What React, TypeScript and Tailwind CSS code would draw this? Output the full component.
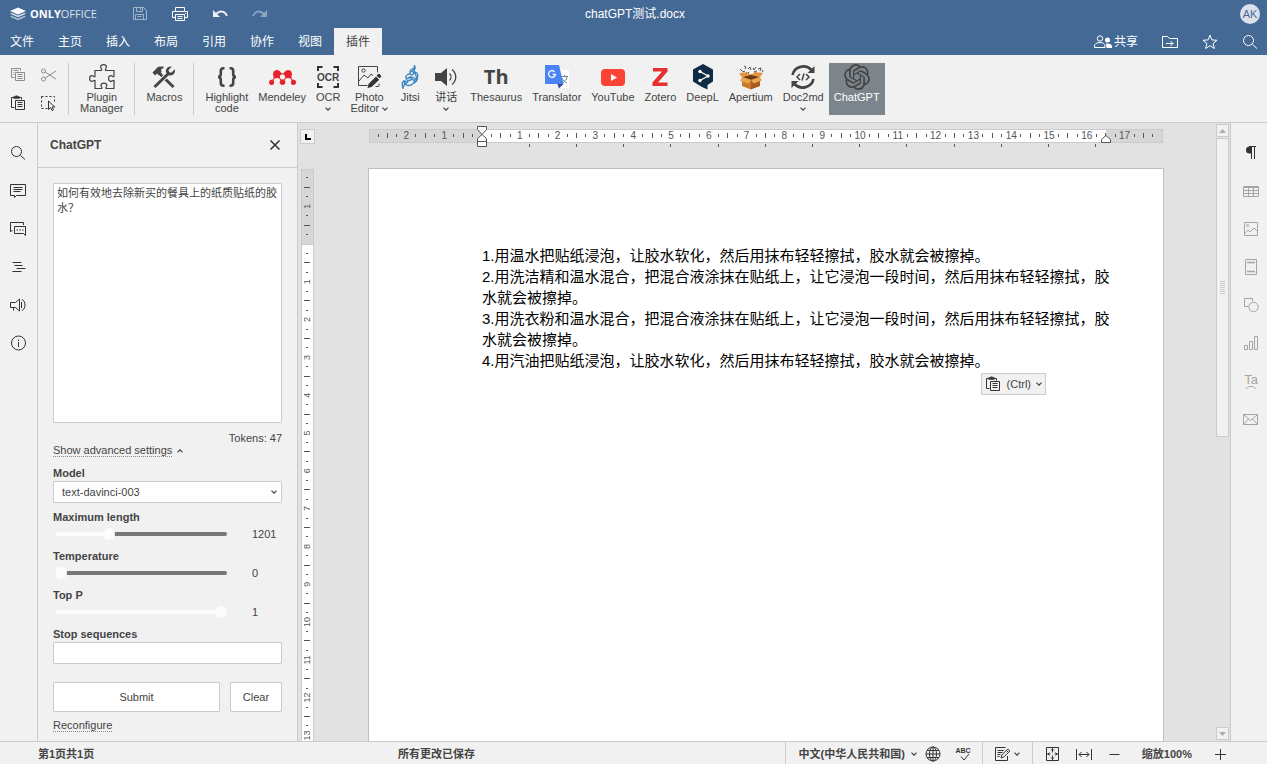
import { useState } from 'react';
import type { ReactNode, SVGProps } from 'react';
import { SiJitsi, SiMendeley, SiOpenai } from 'react-icons/si';

const CM = 37.8;

function Icon({ size = 16, children, ...rest }: { size?: number; children: ReactNode } & SVGProps<SVGSVGElement>) {
    return (
        <svg width={size} height={size} viewBox={`0 0 ${size} ${size}`} fill="none" stroke="currentColor" className="shrink-0" aria-hidden="true" {...rest}>
            {children}
        </svg>
    );
}

function Caret({ up = false }: { up?: boolean }) {
    return (
        <svg width="6" height="4" viewBox="0 0 6 4" fill="none" stroke="#444" strokeWidth="1.2" className="shrink-0" aria-hidden="true">
            <path d={up ? 'M.5 3.3 3 .8l2.5 2.5' : 'M.5.7 3 3.2 5.5.7'} />
        </svg>
    );
}

const copyIcon = (
    <Icon stroke="#8c8c8c">
        <path d="M4.500 10.500H1.500V1.500h9v2M3.500 3.500h5M3.500 5.500h1M3.500 7.500h1M5.500 5.500h9v8h-9zM7.500 7.500h5M7.500 9.500h5M7.500 11.500h5" />
    </Icon>
);

const pasteIcon = (
    <Icon stroke="#333">
        <path d="M4.500 12.500H1.500v-10h2M9.500 2.500h2v2M5.500 5.500h9v9h-9zM7.500 7.500h5M7.500 9.500h5M7.500 11.500h5" />
        <path d="M3.500 3.500v-2h2v-1h2v1h2v2z" fill="#333" stroke="none" />
        <path d="M3.500 2.500h6" strokeWidth="2" />
    </Icon>
);

const cutIcon = (
    <Icon stroke="#8c8c8c">
        <circle cx="3.500" cy="4" r="2" />
        <circle cx="3.500" cy="12" r="2" />
        <path d="M5.200 5 16 12M5.200 11 16 4" />
    </Icon>
);

const selectIcon = (
    <Icon stroke="#333">
        <path d="M1.500 1.500h13v7M1.500 1.500v12h6" strokeDasharray="2 2" />
        <path d="M8.500 6v8.500l2-2 1.500 3 1.500-.7-1.400-2.800h2.700z" fill="#f1f1f1" />
    </Icon>
);

const puzzleIcon = (
    <Icon size={28} stroke="#444" strokeWidth="1.200">
        <path d="M7 7.500h6.500c.8-1.500-.9-2-.9-3.400a2.900 2.400 0 0 1 5.800 0c0 1.400-1.700 1.900-.9 3.400H26v6c-1 .7-1.800-.8-3-.8a2.400 2.800 0 0 0 0 5.600c1.200 0 2-1.500 3-.8v8h-8c-.7-1 .8-1.800.8-3a2.900 2.400 0 0 0-5.800 0c0 1.200 1.500 2 .8 3H7v-8c-1-.7-1.800.8-3 .8a2.400 2.800 0 0 1 0-5.600c1.200 0 2 1.500 3 .8z" />
    </Icon>
);

const macrosIcon = (
    <Icon size={28} stroke="#444">
        <path d="M8.500 9.500 23.500 24" strokeWidth="3" />
        <path d="m2.500 9.500 5.700-5.700 5.300-.3v1.500L11 6.500l.5 2.500-3 3L7 10.500l-2 2z" fill="#444" stroke="none" />
        <path d="M18 11 4.500 24" stroke="#f1f1f1" strokeWidth="5" />
        <path d="M19 10 4.500 24" strokeWidth="3" />
        <path d="m21.800 3.700-3.300 3.400.6 2 2.200.6 3.400-3.400c1.200 4.500-2.500 7-6 6l-2.500-2.500C15 6.500 17.500 3 21.800 3.700z" fill="#444" stroke="none" />
    </Icon>
);

const bracesIcon = (
    <Icon size={28} stroke="#444" strokeWidth="2.600">
        <path d="M11.500 5.300h-1c-2 0-2.700.8-2.700 2.700v3c0 2-.8 3-2.800 3 2 0 2.800 1 2.800 3v3c0 1.900.7 2.700 2.700 2.700h1M16.500 5.300h1c2 0 2.700.8 2.700 2.700v3c0 2 .8 3 2.800 3-2 0-2.800 1-2.800 3v3c0 1.900-.7 2.700-2.700 2.700h-1" />
    </Icon>
);

const ocrIcon = (
    <Icon size={24} stroke="#333" strokeWidth="2">
        <path d="M2 6V2h4.500M17.500 2H22v4M2 18v4h4.500M17.500 22H22v-4" />
        <text x="12" y="15.500" textAnchor="middle" fontSize="10" fontWeight="700" fill="#444" stroke="none">OCR</text>
    </Icon>
);

const photoIcon = (
    <Icon size={28} stroke="#444">
        <path d="M22.500 9.500V3.500h-19v19h9M4 18l5-6 4 3 3-4 2 1.500" />
        <circle cx="8.500" cy="7.500" r="1.700" />
        <path d="m12.500 25 1-4 7.500-7.500 3.200 3.200-7.600 7.300z" fill="#333" stroke="none" />
        <path d="m22 12.500 2-1.500 2 2-1.500 2z" fill="#333" stroke="#333" />
        <path d="M20.500 23.500h3M24 20.500v3" />
    </Icon>
);

const speechIcon = (
    <Icon size={28} stroke="#444" strokeWidth="1.300">
        <path d="M3 10h6l6-5v18l-6-5H3z" fill="#444" stroke="none" />
        <path d="M17.500 10.500c2 2 2 5 0 7M20 6.500c5 4 5 11 0 15" />
    </Icon>
);

const translateIcon = (
    <Icon size={28} stroke="none">
        <path d="M13 7h13v18H16z" fill="#fff" />
        <path d="M2 2h14l4.500 19H2z" fill="#4a84f4" />
        <path d="M14.500 21h6L16 25.500z" fill="#3949ab" />
        <path d="M11.500 8.700a3.400 3.400 0 1 0 .9 2.700H9.500" stroke="#fff" strokeWidth="1.300" />
        <path d="M18 13.500h7M21.500 12v1.500M24 14c-.5 3-2.500 4.500-4.500 6M19 15c1 2.500 3 4 5 5" stroke="#6d8594" />
    </Icon>
);

const youtubeIcon = (
    <Icon size={28} stroke="none">
        <rect x="2" y="6" width="24" height="17" rx="4" fill="#fb4438" />
        <path d="m12 11 6 3.500-6 3.500z" fill="#fff" />
    </Icon>
);

const zoteroIcon = (
    <Icon size={28} stroke="none">
        <path d="M7 5h14.500v3.500L12 19.500h9.500V23H6.500v-3.500l9.500-11H7z" fill="#e5302f" />
    </Icon>
);

const deeplIcon = (
    <Icon size={28} stroke="none">
        <path d="M14 1 24 6.500v12L18.500 22v4.500L13 24 4 18.500v-12z" fill="#0f2b46" />
        <path d="m11 8.500 8 4.500-8 4.500" stroke="#fff" strokeWidth="1.300" />
        <g fill="#fff">
            <circle cx="11" cy="8.500" r="1.700" />
            <circle cx="19" cy="13" r="1.700" />
            <circle cx="11" cy="17.500" r="1.700" />
        </g>
    </Icon>
);

const boxIcon = (
    <Icon size={28} stroke="none">
        <path d="M5 14 14 17v9.500L5 23z" fill="#c8792b" />
        <path d="m14 17 9-3v9l-9 3.500z" fill="#a85a1b" />
        <path d="m5 14 9-2.500L23 14l-9 3z" fill="#6f3a12" />
        <path d="m5 14-3-3.500 8-1.500 4 3zM23 14l3-4-8-1-4 3z" fill="#e0943b" />
        <path d="M5 14 3 18l8.500 2.500L14 17zM23 14l2 3.500-8.500 3L14 17z" fill="#e8a34c" />
        <path d="M3 6l2 2M7 3l2 1-1 2M11 6l2-2 1 3M11 9l1 1M16 5l1 2 2-3M21 6l3-1-1 3M25 7l1 2M17 9l3-1M5 9l3-1" stroke="#555" />
    </Icon>
);

const doc2mdIcon = (
    <Icon size={28} stroke="#444" strokeWidth="2.600">
        <path d="M3.500 12A11 10.500 0 0 1 22.500 7M24.500 16A11 10.500 0 0 1 5.500 21" />
        <path d="M25.500 3v7h-7zM2.500 25v-7h7z" fill="#444" stroke="none" />
        <path d="m11 11-3 3 3 3M17 11l3 3-3 3M15 10.500l-2 7" strokeWidth="1.500" />
    </Icon>
);

const plugins: { name: string; icon: ReactNode; menu?: boolean }[] = [
    { name: 'Highlight code', icon: bracesIcon },
    { name: 'Mendeley', icon: <SiMendeley size={27} color="#e9212d" /> },
    { name: 'OCR', icon: ocrIcon, menu: true },
    { name: 'Photo Editor', icon: photoIcon, menu: true },
    { name: 'Jitsi', icon: <SiJitsi size={24} color="#2c7cc0" stroke="#2c7cc0" strokeWidth="0.6" /> },
    { name: '讲话', icon: speechIcon, menu: true },
    { name: 'Thesaurus', icon: <span className="font-['Open_Sans',sans-serif] text-xl font-bold">Th</span> },
    { name: 'Translator', icon: translateIcon },
    { name: 'YouTube', icon: youtubeIcon },
    { name: 'Zotero', icon: zoteroIcon },
    { name: 'DeepL', icon: deeplIcon },
    { name: 'Apertium', icon: boxIcon },
    { name: 'Doc2md', icon: doc2mdIcon, menu: true },
    { name: 'ChatGPT', icon: <SiOpenai size={26} color="#444" /> },
];

function PluginButton({ name, icon, menu = false }: { name: string; icon: ReactNode; menu?: boolean }) {
    const active = name === 'ChatGPT';
    const words = name.split(' ');
    return (
        <button
            type="button"
            className={`flex h-[52px] shrink-0 flex-col items-center px-[5px] text-[11px] leading-[11px] ${active ? 'bg-[#7d858c] text-white' : 'text-[#444]'}`}
        >
            <span className="flex h-7 items-center justify-center">{icon}</span>
            <span className="mt-px">{words[0]}</span>
            {words.length > 1 ? (
                <span className="flex items-center gap-[3px]">
                    {words[1]}
                    {menu && <Caret />}
                </span>
            ) : (
                menu && <span className="mt-1"><Caret /></span>
            )}
        </button>
    );
}

function Separator() {
    return <div className="mx-1.5 h-[52px] w-px shrink-0 bg-[#cbcbcb]" />;
}

const tabs = ['文件', '主页', '插入', '布局', '引用', '协作', '视图', '插件'];

function Header() {
    return (
        <header className="shrink-0 bg-[#446995] text-white">
            <div className="flex h-7 items-center">
                <div className="flex flex-1 items-center pl-[10px]">
                    <a href="#" className="flex items-center gap-1">
                        <svg width="16" height="14" viewBox="0 0 16 14" fill="#fff" aria-hidden="true">
                            <path d="M8 7.500 0 4l8-3.500L16 4z" />
                            <path d="m0 6.700 1.800-.8L8 8.600l6.200-2.700 1.800.8-8 3.600z" opacity=".8" />
                            <path d="m0 9.700 1.800-.8L8 11.600l6.200-2.700 1.800.8L8 13.300z" opacity=".6" />
                        </svg>
                        <span className="font-['Open_Sans',sans-serif] text-[11px]">
                            <b>ONLY</b><span className="opacity-80">OFFICE</span>
                        </span>
                    </a>
                    <div className="ml-[35px] flex items-center gap-6">
                        <button type="button" aria-label="保存" className="opacity-50">
                            <Icon><path d="M1.500 1.500h10l3 3v9h-13zM4.500 1.500v4h6v-4M8.500 2v2M3.500 13.500v-5h8v5M5.500 10.500h4" /></Icon>
                        </button>
                        <button type="button" aria-label="打印">
                            <Icon><path d="M3.500 5V1.500h9V5M3.500 11.500h-3v-6h15v6h-3M3.500 8.500h9v6h-9zM5.500 10.500h5M5.500 12.500h5M13 7.500h1" /></Icon>
                        </button>
                        <button type="button" aria-label="撤销" className="opacity-90">
                            <Icon strokeWidth="1.800"><path d="M4 8c4-4 9-3 11 2" /><path d="M1 4v7h7z" fill="currentColor" stroke="none" /></Icon>
                        </button>
                        <button type="button" aria-label="重做" className="opacity-40">
                            <Icon strokeWidth="1.800"><path d="M12 8C8 4 3 5 1 10" /><path d="M15 4v7H8z" fill="currentColor" stroke="none" /></Icon>
                        </button>
                    </div>
                </div>
                <h1 className="text-xs">chatGPT测试.docx</h1>
                <div className="flex flex-1 justify-end pr-[7px]">
                    <span className="flex size-5 items-center justify-center rounded-full bg-[#dbe1ea] text-[11px] text-[#446995]">AK</span>
                </div>
            </div>
            <div className="flex h-[27px] items-stretch">
                <nav className="-ml-0.5 flex">
                    {tabs.map((tab) => (
                        <button key={tab} type="button" className={`w-12 text-xs ${tab === '插件' ? 'bg-[#f1f1f1] text-[#444]' : ''}`}>
                            {tab}
                        </button>
                    ))}
                </nav>
                <div className="ml-auto flex items-center gap-6 pr-[9px]">
                    <button type="button" className="flex items-center gap-0.5 text-xs">
                        <Icon size={18}>
                            <circle cx="6" cy="5.500" r="2.700" />
                            <path d="M.500 14.500v-1.500c0-2 2-3.500 5.500-3.500 3 0 5 1.500 5 3.500v1.500z" />
                            <circle cx="13.500" cy="7" r="2.500" fill="currentColor" stroke="none" />
                            <path d="M12 10.500c3-.5 6 .5 6 3V15h-5.500z" fill="currentColor" stroke="none" />
                        </Icon>
                        共享
                    </button>
                    <button type="button" aria-label="打开文件位置">
                        <Icon><path d="M.500 13.500v-11h5l2 2h8v9zM4 9.500h7M8.500 7l2.500 2.500L8.500 12" /></Icon>
                    </button>
                    <button type="button" aria-label="收藏">
                        <Icon><path d="m8 1.200 1.900 4.700 5.100.4-3.900 3.200 1.300 5L8 11.700l-4.400 2.800 1.300-5L1 6.300l5.100-.4z" /></Icon>
                    </button>
                    <button type="button" aria-label="搜索">
                        <Icon><circle cx="6.500" cy="6.500" r="5" /><path d="m10.500 10.500 4.500 4" /></Icon>
                    </button>
                </div>
            </div>
        </header>
    );
}

function Toolbar() {
    return (
        <div className="flex h-[68px] shrink-0 items-start border-b border-[#cbcbcb] bg-[#f1f1f1] pt-2 pl-[10px]">
            <div className="mt-1 mr-1.5 grid grid-cols-2 gap-x-[14px] gap-y-3">
                <button type="button" aria-label="复制">{copyIcon}</button>
                <button type="button" aria-label="剪切">{cutIcon}</button>
                <button type="button" aria-label="粘贴">{pasteIcon}</button>
                <button type="button" aria-label="全选">{selectIcon}</button>
            </div>
            <Separator />
            <PluginButton name="Plugin Manager" icon={puzzleIcon} />
            <Separator />
            <PluginButton name="Macros" icon={macrosIcon} />
            <Separator />
            {plugins.map((p) => (
                <PluginButton key={p.name} {...p} />
            ))}
        </div>
    );
}

const leftTools: [string, ReactNode][] = [
    ['搜索', <><circle cx="6.500" cy="6.500" r="5" /><path d="m10.500 10.500 4.500 4" /></>],
    ['批注', <path d="M.500 1.500h15v11h-9l-2 2v-2h-4zM3.500 4.500h9M3.500 6.500h9M3.500 8.500h7" />],
    ['聊天', <path d="M13.500 4V1.500H.500V11l2-2M4.500 5.500h11v9l-2-2h-9zM6.500 9h1.500M9.300 9h1.500M12 9h1.500" />],
    ['标题', <path d="M2.500 3.500h9M4.500 6.500h8M6.500 9.500h9M2.500 12.500h9" />],
    ['反馈', <path d="M.500 5.500h5l4-3.500v12l-4-3.500h-5zM3.500 10.500v3M11.500 5v6M12 2.500c4 2 4 9 0 11" />],
    ['关于', <><circle cx="8.500" cy="8" r="7" /><path d="M8.500 7v5M8.500 4.500V6" /></>],
];

const rightTools: [string, ReactNode][] = [
    ['段落设置', <><path d="M8.500 2v12M11.500 2v12M6 1.500h7" /><path d="M9 1.500H6.500a3.500 3.500 0 0 0 0 7H9z" fill="currentColor" stroke="none" /></>],
    ['表格设置', <path d="M.500 3.500h15v10H.500zM.500 4.500h15M.500 7.500h15M.500 10.500h15M5.500 4v9M10.500 4v9" />],
    ['图片设置', <><path d="M1.500 1.500h13v13h-13zM2 12l3-3 2 2 4-4 3.500 3.500" /><circle cx="4.500" cy="4.500" r="1" /></>],
    ['页眉页脚设置', <><path d="M2.500.500h11v15h-11z" /><path d="M4 3.500h8M4 12.500h8" strokeWidth="1.500" /></>],
    ['形状设置', <><path d="M5 9.500H1.500v-8h8V4" /><circle cx="10.500" cy="10" r="4.700" /></>],
    ['图表设置', <path d="M1.500 10.500h3v4h-3zM6.500 6.500h3v8h-3zM11.500 1.500h3v13h-3z" />],
    ['艺术字设置', <><text x="8" y="11" textAnchor="middle" fontSize="13" fill="currentColor" stroke="none">Ta</text><path d="M3 16c3-3.500 7-3.500 10 0" /></>],
    ['邮件合并', <path d="M.500 3.500h14v10H.500zM.500 3.500l7 6 7-6M.500 13.500l5-5.500M14.500 13.500 9.500 8" />],
];

function Slider({ id, label, max, step, initial }: { id: string; label: string; max: number; step: number; initial: number }) {
    const [value, setValue] = useState(initial);
    const percent = (value / max) * 100;
    return (
        <>
            <label htmlFor={id} className="mt-[10px] block font-bold first-of-type:mt-2">{label}</label>
            <div className="mt-[5px] flex h-3 items-center">
                <input
                    id={id}
                    type="range"
                    min={0}
                    max={max}
                    step={step}
                    value={value}
                    onChange={(e) => setValue(Number(e.target.value))}
                    className="ml-0.5 h-1 min-w-0 flex-1 appearance-none rounded-sm [&::-webkit-slider-thumb]:size-3 [&::-webkit-slider-thumb]:appearance-none [&::-webkit-slider-thumb]:rounded-full [&::-webkit-slider-thumb]:bg-[#fcfcfc]"
                    style={{ background: `linear-gradient(to right, #fcfcfc ${percent}%, #777 ${percent}%)` }}
                />
                <output htmlFor={id} className="w-[30px] ml-[25px]">{value}</output>
            </div>
        </>
    );
}

function ChatPanel() {
    const [prompt, setPrompt] = useState('如何有效地去除新买的餐具上的纸质贴纸的胶水？');
    const [model, setModel] = useState('text-davinci-003');

    return (
        <aside className="flex w-[260px] shrink-0 flex-col border-r border-[#cbcbcb] text-[11px] leading-3">
            <div className="flex h-[45px] shrink-0 items-center justify-between border-b border-[#cbcbcb] pr-[14px] pl-3">
                <h2 className="text-xs font-bold">ChatGPT</h2>
                <button type="button" aria-label="关闭">
                    <Icon stroke="#333" strokeWidth="1.500"><path d="m3.500 3.500 9 9M12.500 3.500l-9 9" /></Icon>
                </button>
            </div>
            <div className="min-h-0 flex-1 overflow-hidden px-[15px] pt-[15px]">
                <textarea
                    aria-label="ChatGPT"
                    value={prompt}
                    onChange={(e) => setPrompt(e.target.value)}
                    className="block h-60 w-full resize-none rounded-[1px] border border-[#cbcbcb] bg-white px-[3px] py-0.5 leading-[15px]"
                />
                <p className="mt-[9px] text-right">Tokens: 47</p>
                <button type="button" className="flex items-center gap-[5px]">
                    <span className="border-b border-dotted border-[#888]">Show advanced settings</span>
                    <Caret up />
                </button>
                <div className="mt-[10px] flex flex-col">
                    <label htmlFor="model" className="font-bold">Model</label>
                    <div className="relative mt-0.5">
                        <select
                            id="model"
                            value={model}
                            onChange={(e) => setModel(e.target.value)}
                            className="h-[22px] w-full appearance-none rounded-[1px] border border-[#cbcbcb] bg-white px-2"
                        >
                            <option>text-davinci-003</option>
                        </select>
                        <span className="pointer-events-none absolute inset-y-0 right-[5px] flex items-center"><Caret /></span>
                    </div>
                </div>
                <div>
                    <Slider id="max-length" label="Maximum length" max={4000} step={1} initial={1201} />
                    <Slider id="temperature" label="Temperature" max={1} step={0.1} initial={0} />
                    <Slider id="top-p" label="Top P" max={1} step={0.1} initial={1} />
                </div>
                <label htmlFor="stop" className="mt-[10px] block font-bold">Stop sequences</label>
                <input id="stop" type="text" className="mt-0.5 block h-[22px] w-full rounded-[1px] border border-[#cbcbcb] bg-white px-1" />
                <div className="mt-[18px] flex gap-[10px]">
                    <button type="button" className="h-[30px] flex-1 rounded-[1px] border border-[#cbcbcb] bg-white">Submit</button>
                    <button type="button" className="h-[30px] w-[52px] rounded-[1px] border border-[#cbcbcb] bg-white">Clear</button>
                </div>
                <a href="#" className="mt-[7px] inline-block border-b border-dotted border-[#888]">Reconfigure</a>
            </div>
        </aside>
    );
}

// quarter steps: short tick, half: long tick, whole: number
const steps = (from: number, to: number) => Array.from({ length: to - from + 1 }, (_, i) => from + i).filter((n) => n !== 0);

function HorizontalRuler() {
    return (
        <svg width="794" height="24" className="shrink-0" stroke="#555" fontSize="10" aria-hidden="true">
            <rect x=".5" y="3.500" width="793" height="13" fill="#d6d6d6" stroke="#cbcbcb" />
            <rect x="113" y="4" width="624" height="12" fill="#fff" stroke="none" />
            {steps(-11, 71).map((n) => {
                const x = 113 + (n * CM) / 4;
                if (n % 4 === 0) {
                    return <text key={n} x={x} y="13" textAnchor="middle" fill="#555" stroke="none">{Math.abs(n / 4)}</text>;
                }
                const half = n % 2 === 0 ? 2.5 : 1.5;
                return <path key={n} d={`M${Math.floor(x) + 0.5} ${10 - half - 0.5}v${half * 2}`} />;
            })}
            {Array.from({ length: 13 }, (_, i) => (
                <path key={i} d={`M${Math.floor(113 + (i + 1) * 47.2) + 0.5} 18v3`} />
            ))}
            <g fill="#fff">
                <path d="M108.500.500h9v3l-4.500 5-4.500-5zM108.500 15.500v-3l4.500-4 4.500 4v3zM108.500 15.500h9v5h-9z" />
                <path d="M732.500 16.500v-3l4.500-4 4.500 4v3z" />
            </g>
        </svg>
    );
}

function VerticalRuler() {
    return (
        <svg width="13" className="min-h-0 flex-1" stroke="#555" fontSize="9" aria-hidden="true">
            <rect x=".5" y=".5" width="12" height="1122" fill="#fff" stroke="#cbcbcb" />
            <rect x=".5" y=".5" width="12" height="75" fill="#d6d6d6" stroke="#cbcbcb" />
            {steps(-7, 52).map((n) => {
                const y = 75 + (n * CM) / 4;
                if (n % 4 === 0) {
                    return <text key={n} transform={`translate(9 ${y}) rotate(-90)`} textAnchor="middle" fill="#555" stroke="none">{Math.abs(n / 4)}</text>;
                }
                const half = n % 2 === 0 ? 3 : 1;
                return <path key={n} d={`M${6 - half} ${Math.floor(y) + 0.5}h${half * 2}`} />;
            })}
        </svg>
    );
}

const lines = [
    '1.用温水把贴纸浸泡，让胶水软化，然后用抹布轻轻擦拭，胶水就会被擦掉。',
    '2.用洗洁精和温水混合，把混合液涂抹在贴纸上，让它浸泡一段时间，然后用抹布轻轻擦拭，胶',
    '水就会被擦掉。',
    '3.用洗衣粉和温水混合，把混合液涂抹在贴纸上，让它浸泡一段时间，然后用抹布轻轻擦拭，胶',
    '水就会被擦掉。',
    '4.用汽油把贴纸浸泡，让胶水软化，然后用抹布轻轻擦拭，胶水就会被擦掉。',
];

function Editor() {
    return (
        <main className="flex min-w-0 flex-1 bg-[#e2e2e2]">
            <div className="flex w-[18px] shrink-0 flex-col pt-1.5 pl-[3px]">
                <button type="button" aria-label="制表位" className="-ml-px mb-[25px] flex size-[15px] shrink-0 items-center justify-center border border-[#cbcbcb] bg-[#f1f1f1]">
                    <svg width="6" height="6" stroke="#000" strokeWidth="2" fill="none" aria-hidden="true"><path d="M1 0v5h5" /></svg>
                </button>
                <VerticalRuler />
            </div>
            <div className="flex min-w-0 flex-1 flex-col items-center overflow-hidden pt-[3px]">
                <HorizontalRuler />
                <div className="relative mt-[18px] w-[796px] flex-1 border border-b-0 border-[#bbbec2] bg-white px-[113px] pt-[76px] text-[15px] leading-[21px] whitespace-nowrap text-black">
                    {lines.map((line, i) => (
                        <p key={i}>{line}</p>
                    ))}
                    <button type="button" className="absolute top-[204px] right-[117px] flex h-[22px] items-center border border-[#cbcbcb] bg-[#f1f1f1] px-[3px] text-[11px] leading-3 text-[#444]">
                        {pasteIcon}
                        <span className="mr-[5px] ml-[6px]">(Ctrl)</span>
                        <Caret />
                    </button>
                </div>
            </div>
            <div className="flex w-[14px] shrink-0 flex-col items-start gap-px py-px">
                <button type="button" aria-label="向上滚动" className="flex size-[13px] items-center justify-center border border-[#cbcbcb] bg-[#f1f1f1]">
                    <svg width="7" height="4" fill="#adadad" aria-hidden="true"><path d="M0 4 3.500 0 7 4z" /></svg>
                </button>
                <div className="flex min-h-0 w-[13px] flex-1 flex-col">
                    <div className="flex h-[299px] items-center justify-center border border-[#cbcbcb] bg-[#f1f1f1]">
                        <svg width="5" height="13" stroke="#cbcbcb" aria-hidden="true"><path d="M0 .5h5M0 2.500h5M0 4.500h5M0 6.500h5M0 8.500h5M0 10.500h5M0 12.500h5" /></svg>
                    </div>
                </div>
                <button type="button" aria-label="向下滚动" className="flex size-[13px] items-center justify-center border border-[#cbcbcb] bg-[#f1f1f1]">
                    <svg width="7" height="4" fill="#adadad" aria-hidden="true"><path d="M0 0h7L3.500 4z" /></svg>
                </button>
            </div>
        </main>
    );
}

function StatusBar() {
    return (
        <footer className="flex h-[23px] shrink-0 items-stretch border-t border-[#cbcbcb] text-[11px] font-bold *:pt-0.5">
            <div className="flex w-[360px] items-center pl-[38px]">第1页共1页</div>
            <div className="flex flex-1 items-center pl-[38px]">所有更改已保存</div>
            <div className="flex items-center border-l border-[#cbcbcb] pr-[11px] pl-[13px]">
                <button type="button" className="flex items-center gap-[6px]">中文(中华人民共和国)<Caret /></button>
                <button type="button" aria-label="文档语言" className="ml-2">
                    <Icon stroke="#333"><circle cx="8" cy="8" r="7" /><ellipse cx="8" cy="8" rx="3.500" ry="7" /><path d="M8 1v14M1 8h14M2 4.500h12M2 11.500h12" /></Icon>
                </button>
                <button type="button" aria-label="拼写检查" className="ml-[14px]">
                    <Icon stroke="#333"><text x="8" y="7" textAnchor="middle" fontSize="7" fontWeight="700" fill="#333" stroke="none">ABC</text><path d="m6 10.500 3 3.500 5-6" /></Icon>
                </button>
            </div>
            <button type="button" aria-label="跟踪更改" className="flex items-center gap-1 border-l border-[#cbcbcb] pr-3 pl-[11px]">
                <Icon stroke="#333"><path d="M13.500 10v4.500h-12v-13h10M3.500 4.500h6M3.500 6.500h5M3.500 8.500h3M3.500 10.500h2M7 12l.8-3 6-6 2 2-6 6zM12.500 4.500l1.500 1.500" /></Icon>
                <Caret />
            </button>
            <div className="flex items-center gap-[15px] border-l border-[#cbcbcb] pr-10 pl-3">
                <button type="button" aria-label="适合页面">
                    <Icon stroke="#333"><path d="M1.500 1.500h12v13h-12zM7.500 1.500v5M7.500 9.500v5M1.500 8h4M9.500 8h4M6 4.500 7.500 3 9 4.500M6 11.500 7.500 13 9 11.500M4.500 6.500 3 8l1.500 1.500M10.500 6.500 12 8l-1.500 1.500" /></Icon>
                </button>
                <button type="button" aria-label="适合宽度">
                    <Icon stroke="#333"><path d="M.500 3v11M15.500 3v11M3 8.500h10M5.500 6 3 8.500 5.500 11M10.500 6l2.500 2.500-2.500 2.500" /></Icon>
                </button>
                <button type="button" aria-label="缩小"><Icon stroke="#333"><path d="M2.500 8.500h10" /></Icon></button>
                <span className="mx-1">缩放100%</span>
                <button type="button" aria-label="放大"><Icon stroke="#333"><path d="M4 8.500h11M9.500 3v11" /></Icon></button>
            </div>
        </footer>
    );
}

export default function App() {
    return (
        <div className="flex h-screen flex-col overflow-hidden bg-[#f1f1f1] font-['Liberation_Sans','Noto_Sans_CJK_SC',sans-serif] text-[#444]">
            <Header />
            <Toolbar />
            <div className="flex min-h-0 flex-1">
                <nav className="flex w-[38px] shrink-0 flex-col items-center border-r border-[#cbcbcb] pt-[11px] pr-0.5 text-[#333]">
                    {leftTools.map(([name, icon]) => (
                        <button key={name} type="button" aria-label={name} className="flex h-[38px] w-full items-center justify-center">
                            <Icon>{icon}</Icon>
                        </button>
                    ))}
                </nav>
                <ChatPanel />
                <Editor />
                <nav className="flex w-[37px] shrink-0 flex-col items-center border-l border-[#cbcbcb] pt-[11px] pl-1">
                    {rightTools.map(([name, icon], i) => (
                        <button key={name} type="button" aria-label={name} className={`flex h-[38px] w-full items-center justify-center ${i === 0 ? 'text-[#333]' : 'text-[#a5a5a5]'}`}>
                            <Icon>{icon}</Icon>
                        </button>
                    ))}
                </nav>
            </div>
            <StatusBar />
        </div>
    );
}
